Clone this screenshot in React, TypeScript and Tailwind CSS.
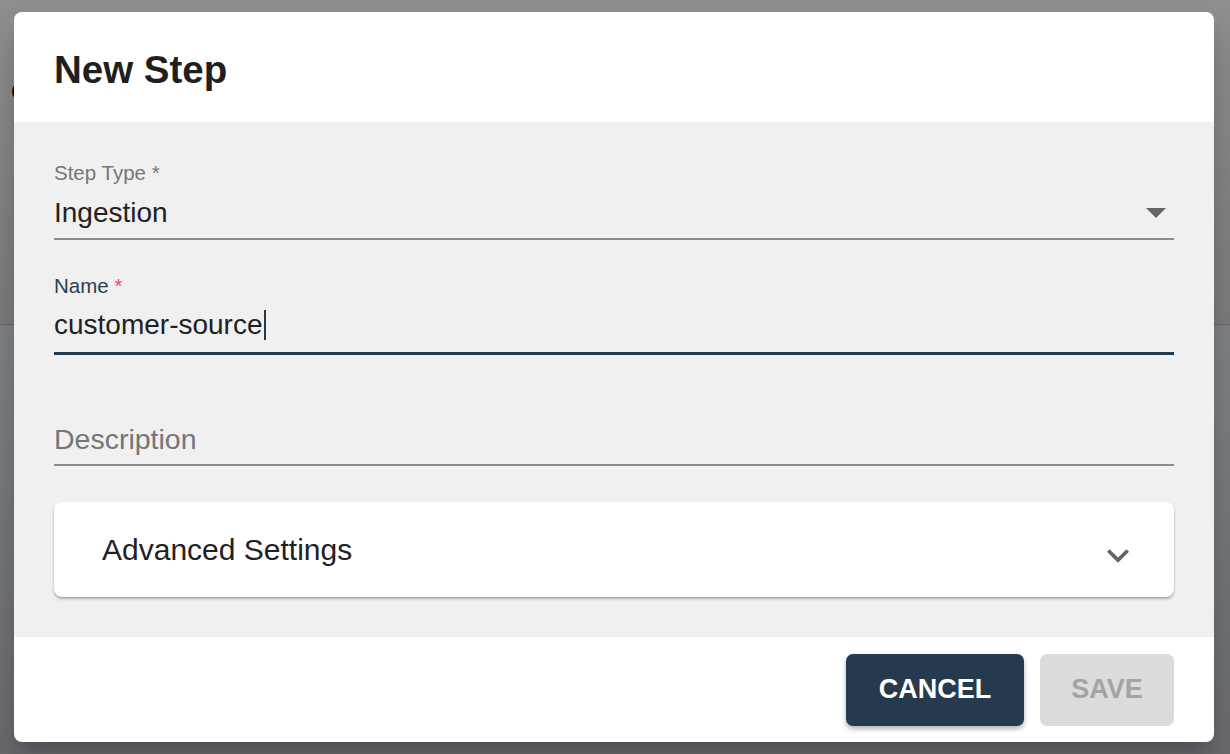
function Field({ children }: { children: React.ReactNode }) {
  return <div className="flex flex-col">{children}</div>;
}

export default function App() {
  return (
    <div className="relative h-[754px] w-[1230px] overflow-hidden font-[family-name:Liberation_Sans,Arial,sans-serif]">
      {/* dimmed page behind the dialog */}
      <div className="flex h-full flex-col">
        <div className="h-[325px] border-b border-[#666] bg-gradient-to-b from-[#8f8f8f] to-[#7b7b7b] pl-[11px] pt-[74px]">
          <span className="text-[28px] leading-[32px] text-black">c</span>
        </div>
        <div className="flex-1 bg-gradient-to-b from-[#7f8286] to-[#686a6e]" />
      </div>

      {/* dialog */}
      <div className="absolute left-[14px] top-[12px] flex h-[730px] w-[1200px] flex-col overflow-hidden rounded-[8px] bg-white shadow-[0_11px_15px_-7px_rgba(0,0,0,0.2),0_24px_38px_3px_rgba(0,0,0,0.14)]">
        <div className="h-[110px] shrink-0 px-[40px] pt-[36px]">
          <h1 className="text-[38.5px] font-bold leading-[44px] text-[#1f1f1f]">New Step</h1>
        </div>

        <div className="flex h-[515px] shrink-0 flex-col bg-[#f0f0f0] px-[40px] pt-[39px]">
          <Field>
            <label className="text-[20.5px] leading-[24px] text-[#767676]">Step Type *</label>
            <div className="mt-[12px] flex items-center justify-between">
              <span className="text-[28px] leading-[32px] text-[#212121]">Ingestion</span>
              <svg width="20" height="10" viewBox="0 0 20 10" className="mr-[8px]">
                <path d="M0 0h20L10 10z" fill="#666" />
              </svg>
            </div>
            <div className="mt-[9px] h-[2px] bg-[#8a8a8a]" />
          </Field>

          <Field>
            <label className="mt-[34px] text-[20.5px] leading-[24px] text-[#2a3e52]">
              Name <span className="text-[#e8467c]">*</span>
            </label>
            <div className="mt-[11px] flex items-center text-[28px] leading-[32px] text-[#212121]">
              customer-source
              <span className="ml-[1px] inline-block h-[30px] w-[2px] bg-[#263a4d]" />
            </div>
            <div className="mt-[11px] h-[3px] bg-[#263a4d]" />
          </Field>

          <Field>
            <div className="mt-[68px] text-[28.5px] leading-[32px] text-[#757575]">Description</div>
            <div className="mt-[9px] h-[2px] bg-[#8a8a8a]" />
          </Field>

          <div className="mt-[36px] flex h-[95px] items-center justify-between rounded-[8px] bg-white pl-[48px] pr-[45px] shadow-[0_2px_3px_rgba(0,0,0,0.25),0_1px_1px_rgba(0,0,0,0.12)]">
            <span className="text-[30px] leading-[32px] text-[#212121]">Advanced Settings</span>
            <svg width="22" height="14" viewBox="6 8.59 12 7.41" className="mt-[13px]">
              <path d="M16.59 8.59L12 13.17 7.41 8.59 6 10l6 6 6-6z" fill="#666" />
            </svg>
          </div>
        </div>

        <div className="flex flex-1 items-center justify-end gap-[16px] pr-[40px]">
          <button className="h-[72px] w-[178px] rounded-[7px] bg-[#253a4c] text-[27px] font-bold text-white shadow-[0_3px_5px_rgba(0,0,0,0.3)]">
            CANCEL
          </button>
          <button className="h-[72px] w-[134px] rounded-[7px] bg-[#dcdcdc] text-[27px] font-bold text-[#a3a3a3]">
            SAVE
          </button>
        </div>
      </div>
    </div>
  );
}
